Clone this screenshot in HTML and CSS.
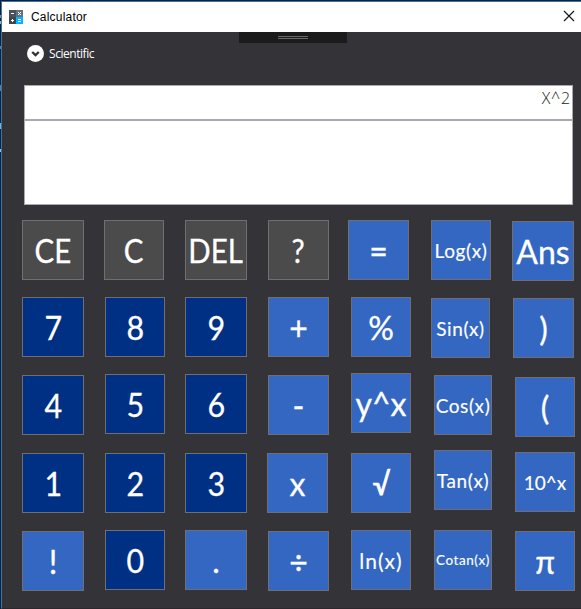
FILE: index.html
```html
<!DOCTYPE html>
<html lang="en">
<head>
<meta charset="utf-8">
<title>Calculator</title>
<link rel="stylesheet" href="styles.css">
</head>
<body>
<div class="backdrop"><i class="b1"></i><i class="b2"></i><i class="b3"></i><i class="b4"></i><i class="b5"></i><i class="b6"></i></div>
<main class="window">
  <header class="titlebar">
    <svg class="app-icon" width="14" height="14" viewBox="0 0 14 14">
      <path fill="#46535c" d="M0 0h7v7H0z"/><path fill="#65727a" d="M7 0h7v7H7z"/><path fill="#3b4850" d="M0 7h7v7H0z"/><path fill="#00b4ff" d="M7 7h7v7H7z"/>
      <path stroke="#fff" fill="none" d="M2 3.5h3M9 2l3 3M12 2l-3 3M2 10.500h3M3.500 9v3M9 9.500h3M9 11.500h3"/>
    </svg>
    <h1>Calculator</h1>
    <svg class="close" width="12" height="12" viewBox="0 0 12 12"><path stroke="#111" stroke-width="1.100" d="M1 1l10 10M11 1L1 11"/></svg>
  </header>
  <div class="handle"><i></i></div>
  <div class="mode">
    <svg width="17" height="17" viewBox="0 0 17 17"><circle cx="8.500" cy="8.500" r="8.500" fill="#fff"/><path d="M5.200 7l3.300 3.100L11.800 7" fill="none" stroke="#333238" stroke-width="2.300"/></svg>
    <span>Scientific</span>
  </div>
  <section class="display"><div class="expression">X^2</div><div class="result"></div></section>
  <section class="keys">
    <button class="gray w62"><span>CE</span></button>
    <button class="gray"><span>C</span></button>
    <button class="gray w62"><span>DEL</span></button>
    <button class="gray w61 dx1"><span>?</span></button>
    <button class="w61"><span>=</span></button>
    <button class="md"><span>Log(x)</span></button>
    <button class="w62 dy1"><span>Ans</span></button>

    <button class="navy w62"><span>7</span></button>
    <button class="navy dx1"><span>8</span></button>
    <button class="navy w62"><span>9</span></button>
    <button class="w61 dx1"><span>+</span></button>
    <button class="dx3"><span>%</span></button>
    <button class="md w59 dy1"><span>Sin(x)</span></button>
    <button class="w61 dx1 dy1"><span>)</span></button>

    <button class="navy w62 dy2"><span>4</span></button>
    <button class="navy dx1 dy1"><span>5</span></button>
    <button class="navy w62 dy1"><span>6</span></button>
    <button class="w61 dx1 dy2"><span>-</span></button>
    <button class="dx3"><span>y^x</span></button>
    <button class="md w58 dx3 dy2"><span>Cos(x)</span></button>
    <button class="dx3 dy4"><span>(</span></button>

    <button class="navy w62 dy3"><span>1</span></button>
    <button class="navy dx1 dy3"><span>2</span></button>
    <button class="navy w62 dy3"><span>3</span></button>
    <button class="w61 dy3"><span>x</span></button>
    <button class="root dx3 dy3"><span>√</span></button>
    <button class="md w58 dx3"><span>Tan(x)</span></button>
    <button class="pow dx3 dy2"><span>10^x</span></button>

    <button class="w62 dy1"><span>!</span></button>
    <button class="navy dx1"><span>0</span></button>
    <button class="w62"><span>.</span></button>
    <button class="w61 dx1 dy1"><span>÷</span></button>
    <button class="ln dx3"><span>ln(x)</span></button>
    <button class="sm w58 dx3"><span>Cotan(x)</span></button>
    <button class="dx3 dy1"><span>π</span></button>
  </section>
</main>
</body>
</html>
```
FILE: styles.css
```css
* { box-sizing: border-box; }
body { margin: 0; width: 581px; height: 609px; display: flex; background: #1b1b20; padding-top: 1px; overflow: hidden; }
.backdrop { width: 1px; display: flex; flex-direction: column; }
.backdrop i { display: block; width: 1px; height: 3px; }
.b1 { margin-top: 14px; background: #b08a68; }
.b2 { margin-top: 3px; background: #b9ab86; }
.b3 { margin-top: 22px; background: #777; }
.backdrop .b4 { margin-top: 36px; height: 6px; background: #77777a; }
.backdrop .b5 { margin-top: 32px; height: 6px; background: #86b2c5; }
.b6 { margin-top: 20px; background: #a9bd9c; }
.window { width: 580px; height: 608px; border-top: 1px solid #2878bd; border-left: 1px solid #2878bd; border-bottom: 1px solid #2c272d; background: #343338; display: flex; flex-direction: column; }
.titlebar { height: 30px; background: #fff; display: flex; align-items: center; padding: 0 6px 0 7px; }
.app-icon { margin-top: -1px; }
h1 { margin: -1px auto 0 8px; font: 12px/16px "Liberation Sans", sans-serif; letter-spacing: .2px; color: #000; }
.close { margin-top: -2px; }
.handle { width: 108px; height: 11px; margin-left: 237px; background: #1b1b1b; padding-top: 4px; }
.handle i { display: block; width: 30px; height: 3px; margin: 0 auto; border: solid #6a6a6a; border-width: 1px 0; }
.mode { display: flex; height: 17px; margin: 2px 0 0 25px; align-items: center; gap: 5px; color: #fff; font: 12px/16px "Open Sans", sans-serif; letter-spacing: -.45px; }
.display { width: 549px; height: 120px; margin: 23px 0 0 22px; border: 1px solid #aaa8b0; background: #fff; display: flex; flex-direction: column; }
.expression { height: 35px; border-bottom: 2px solid #aaa8b0; text-align: right; padding-right: 1px; font: 300 16px/24px "Open Sans", sans-serif; letter-spacing: .8px; color: #222; }
.keys { margin: 15px 0 0 20px; display: grid; grid-template-columns: 82px 81px 82px 81px 83px 81px 66px; grid-template-rows: 77px 76px 77px 80px 62px; align-items: start; }
button { width: 60px; height: 60px; margin: 0; padding: 0; border: 1px solid #706e70; background: #3467c2; color: #fff; font: 32px/59px Lato, sans-serif; -webkit-text-stroke: .3px #fff; display: flex; justify-content: center; white-space: nowrap; }
button span { flex: none; }
.gray { background: #4b4b4b; }
.gray span { transform: scaleX(.92); }
.navy { background: #003084; }
.navy span { transform: scaleX(.95); }
.w62 { width: 62px; } .w61 { width: 61px; } .w59 { width: 59px; } .w58 { width: 58px; }
.dx1 { margin-left: 1px; } .dx3 { margin-left: 3px; }
.dy1 { margin-top: 1px; } .dy2 { margin-top: 2px; } .dy3 { margin-top: 3px; } .dy4 { margin-top: 4px; }
.md, .pow, .ln, .sm { -webkit-text-stroke-width: .15px; }
.md { font-size: 19px; letter-spacing: .6px; }
.pow { font-size: 19px; }
.ln { font-size: 21px; letter-spacing: 1px; }
.sm { font-size: 13.5px; letter-spacing: .55px; }
.root { font-size: 30px; -webkit-text-stroke-width: .9px; }
.root span { transform: scaleX(.92); }
```
